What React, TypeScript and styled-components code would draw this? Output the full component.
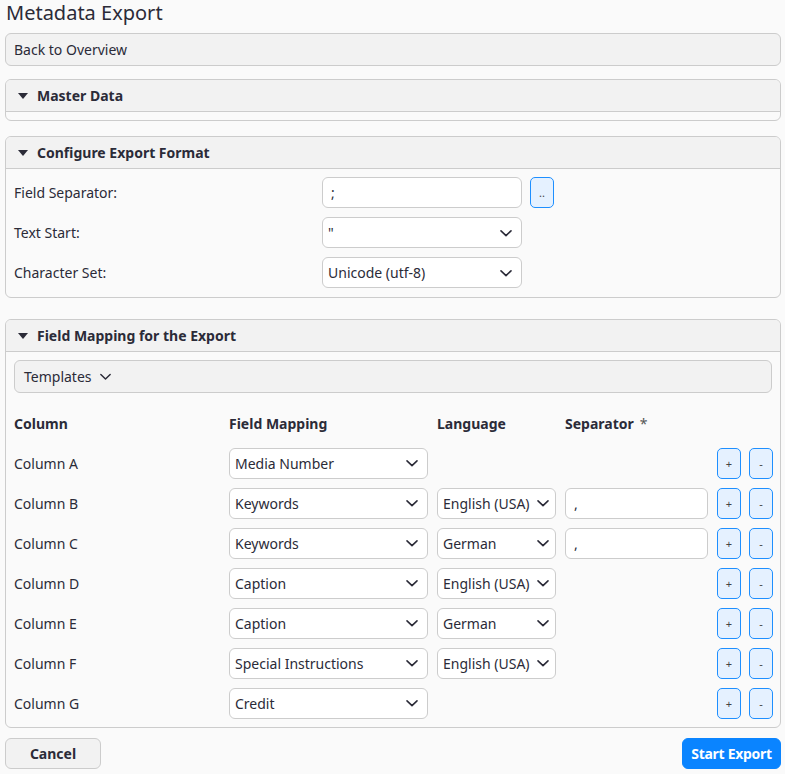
import React from 'react';
import styled, { createGlobalStyle } from 'styled-components';

const GlobalStyle = createGlobalStyle`
  html, body {
    margin: 0;
    padding: 0;
    background: #fafafa;
  }
  body {
    font-family: 'Noto Sans', 'Open Sans', sans-serif;
    font-size: 14px;
    color: #333;
  }
  * { box-sizing: border-box; }
`;

const Page = styled.div`
  padding: 0 4px 0 5px;
  display: flex;
  flex-direction: column;
`;

const Title = styled.h1`
  margin: 0 0 7px 1px;
  font-size: 20px;
  font-weight: 400;
  line-height: 26px;
  color: #2b2b38;
`;

const BackBar = styled.div`
  height: 33px;
  display: flex;
  align-items: center;
  padding: 0 8px;
  background: #f2f2f2;
  border: 1px solid #ccc;
  border-radius: 6px;
  color: #2b2b38;
`;

const Panel = styled.section<{ $top: number }>`
  margin-top: ${({ $top }) => $top}px;
  border: 1px solid #ccc;
  border-radius: 6px;
  background: #fafafa;
  overflow: hidden;
`;

const PanelHeader = styled.div`
  height: 32px;
  display: flex;
  align-items: center;
  gap: 9px;
  padding: 0 12px;
  background: #f2f2f2;
  border-bottom: 1px solid #ccc;
  font-weight: 700;
  color: #2b2b38;
`;

const Caret = styled.span`
  width: 0;
  height: 0;
  border-left: 5px solid transparent;
  border-right: 5px solid transparent;
  border-top: 6px solid #2b2b38;
`;

const EmptyBody = styled.div`
  height: 8px;
`;

const FormatBody = styled.div`
  display: grid;
  grid-template-columns: 300px 200px auto;
  column-gap: 8px;
  row-gap: 9px;
  align-items: center;
  padding: 8px 8px 9px;
`;

const Label = styled.span`
  color: #2b2b38;
`;

const TextInput = styled.input`
  height: 31px;
  width: 100%;
  padding: 0 8px;
  border: 1px solid #ccc;
  border-radius: 6px;
  background: #fff;
  font: inherit;
  color: #2b2b38;
  outline: none;
`;

const SelectWrap = styled.div`
  position: relative;
  height: 31px;
`;

const NativeSelect = styled.select`
  appearance: none;
  width: 100%;
  height: 100%;
  padding: 0 20px 0 5px;
  border: 1px solid #ccc;
  border-radius: 6px;
  background: #fff;
  font: inherit;
  color: #2b2b38;
  outline: none;
`;

const ChevronBox = styled.span<{ $tight?: boolean }>`
  position: absolute;
  right: ${({ $tight }) => ($tight ? 6 : 9)}px;
  top: 50%;
  transform: translateY(-50%);
  display: flex;
  pointer-events: none;
`;

const Chevron = ({ size = 14 }: { size?: number }) => (
  <svg width={size} height={size} viewBox="0 0 14 14" fill="none">
    <path d="M2 4.8 7 9.6l5-4.8" stroke="#2b2b38" strokeWidth="1.6" strokeLinecap="round" strokeLinejoin="round" />
  </svg>
);

function Select({ value, options, tight }: { value: string; options?: string[]; tight?: boolean }) {
  const list = options ?? [value];
  return (
    <SelectWrap>
      <NativeSelect defaultValue={value}>
        {list.map((o) => (
          <option key={o}>{o}</option>
        ))}
      </NativeSelect>
      <ChevronBox $tight={tight}>
        <Chevron />
      </ChevronBox>
    </SelectWrap>
  );
}

const SmallButton = styled.button`
  width: 24px;
  height: 31px;
  padding: 0;
  border: 1.5px solid #1e8fff;
  border-radius: 5px;
  background: #e5f1ff;
  color: #444;
  font: inherit;
  font-size: 11px;
  line-height: 1;
  cursor: pointer;
`;

const MappingBody = styled.div`
  padding: 8px 8px 4px 8px;
`;

const TemplatesBar = styled.div`
  height: 33px;
  display: flex;
  align-items: center;
  gap: 7px;
  padding: 0 9px;
  background: #f2f2f2;
  border: 1px solid #ccc;
  border-radius: 6px;
  color: #2b2b38;
`;

const MapGrid = styled.div`
  margin-top: 10px;
  display: grid;
  grid-template-columns: 206px 199px 119px 143px 1fr;
  grid-auto-rows: 40px;
  column-gap: 9px;
  align-items: center;
`;

const HeadCell = styled.span`
  font-weight: 700;
  color: #2b2b38;
`;

const Star = styled.span`
  font-weight: 400;
  margin-left: 6px;
  color: #555;
`;

const Actions = styled.div`
  display: flex;
  justify-content: flex-end;
  gap: 8px;
`;

const Footer = styled.div`
  margin-top: 10px;
  display: flex;
  justify-content: space-between;
`;

const FooterButton = styled.button<{ $primary?: boolean }>`
  height: 31px;
  width: ${({ $primary }) => ($primary ? 99 : 96)}px;
  padding: 0;
  border-radius: 6px;
  border: 1px solid ${({ $primary }) => ($primary ? '#0a84ff' : '#ccc')};
  background: ${({ $primary }) => ($primary ? '#0a84ff' : '#f2f2f2')};
  color: ${({ $primary }) => ($primary ? '#fff' : '#2b2b38')};
  font: inherit;
  font-weight: 700;
  letter-spacing: ${({ $primary }) => ($primary ? '-0.3px' : '0')};
  cursor: pointer;
`;

type Row = {
  column: string;
  field: string;
  language?: string;
  separator?: string;
};

const rows: Row[] = [
  { column: 'Column A', field: 'Media Number' },
  { column: 'Column B', field: 'Keywords', language: 'English (USA)', separator: ',' },
  { column: 'Column C', field: 'Keywords', language: 'German', separator: ',' },
  { column: 'Column D', field: 'Caption', language: 'English (USA)' },
  { column: 'Column E', field: 'Caption', language: 'German' },
  { column: 'Column F', field: 'Special Instructions', language: 'English (USA)' },
  { column: 'Column G', field: 'Credit' },
];

const fields = ['Media Number', 'Keywords', 'Caption', 'Special Instructions', 'Credit'];
const languages = ['English (USA)', 'German'];

export default function App() {
  return (
    <>
      <GlobalStyle />
      <Page>
        <Title>Metadata Export</Title>
        <BackBar>Back to Overview</BackBar>

        <Panel $top={13}>
          <PanelHeader>
            <Caret />
            Master Data
          </PanelHeader>
          <EmptyBody />
        </Panel>

        <Panel $top={15}>
          <PanelHeader>
            <Caret />
            Configure Export Format
          </PanelHeader>
          <FormatBody>
            <Label>Field Separator:</Label>
            <TextInput defaultValue=";" />
            <SmallButton>..</SmallButton>

            <Label>Text Start:</Label>
            <Select value={'"'} options={['"', "'"]} />
            <span />

            <Label>Character Set:</Label>
            <Select value="Unicode (utf-8)" options={['Unicode (utf-8)', 'ISO-8859-1']} />
            <span />
          </FormatBody>
        </Panel>

        <Panel $top={21}>
          <PanelHeader>
            <Caret />
            Field Mapping for the Export
          </PanelHeader>
          <MappingBody>
            <TemplatesBar>
              Templates
              <Chevron size={13} />
            </TemplatesBar>
            <MapGrid>
              <HeadCell>Column</HeadCell>
              <HeadCell>Field Mapping</HeadCell>
              <HeadCell>Language</HeadCell>
              <HeadCell>
                Separator<Star>*</Star>
              </HeadCell>
              <span />

              {rows.map((r) => (
                <React.Fragment key={r.column}>
                  <Label>{r.column}</Label>
                  <Select value={r.field} options={fields} />
                  {r.language ? <Select value={r.language} options={languages} tight /> : <span />}
                  {r.separator ? <TextInput defaultValue={r.separator} /> : <span />}
                  <Actions>
                    <SmallButton>+</SmallButton>
                    <SmallButton>-</SmallButton>
                  </Actions>
                </React.Fragment>
              ))}
            </MapGrid>
          </MappingBody>
        </Panel>

        <Footer>
          <FooterButton>Cancel</FooterButton>
          <FooterButton $primary>Start Export</FooterButton>
        </Footer>
      </Page>
    </>
  );
}
